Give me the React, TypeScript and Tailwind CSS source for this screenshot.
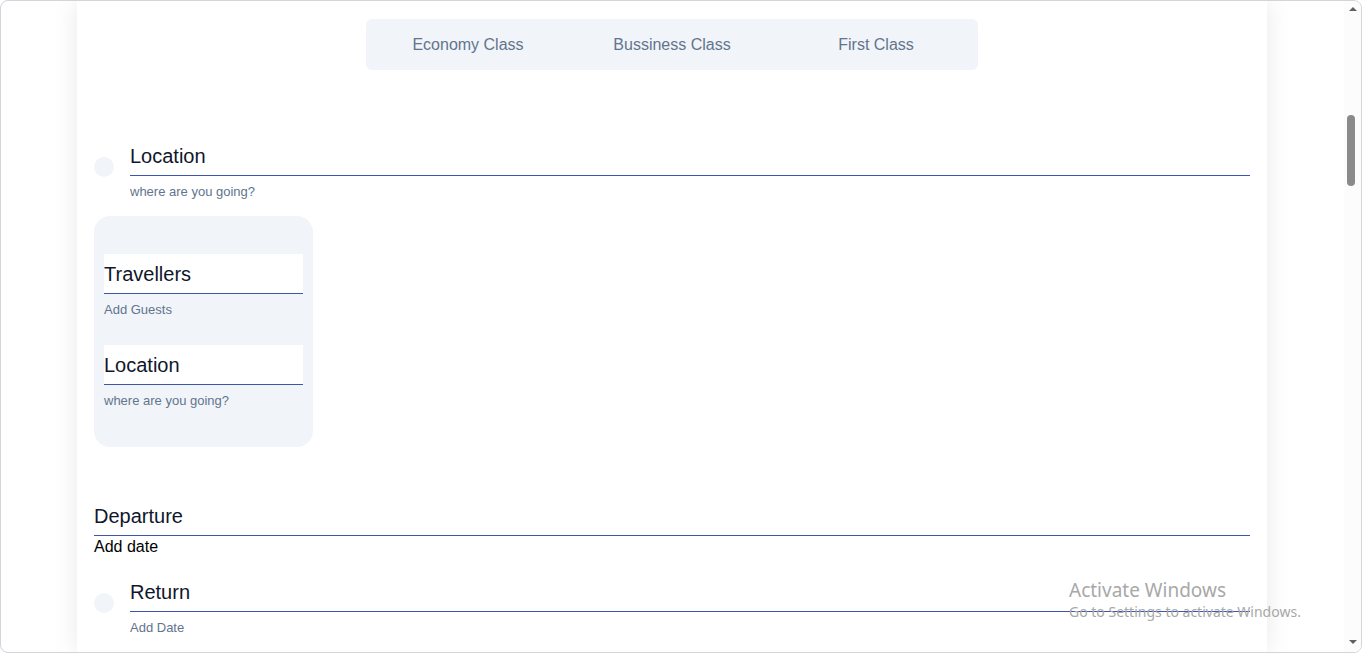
const tabs = ["Economy Class", "Bussiness Class", "First Class"];

function Field({ label, hint }: { label: string; hint: string }) {
  return (
    <div className="flex items-start gap-4">
      <div className="mt-[15px] h-5 w-5 shrink-0 rounded-full bg-slate-100" />
      <div className="flex-1">
        <div className="border-b border-[#3c55ad] pb-[5px] text-[20px] leading-7 text-slate-900">{label}</div>
        <div className="mt-[8px] text-[13px] leading-4 text-slate-500">{hint}</div>
      </div>
    </div>
  );
}

function BoxInput({ label, hint }: { label: string; hint: string }) {
  return (
    <div>
      <div className="flex h-10 items-center border-b border-[#3c55ad] bg-white text-[20px] leading-7 text-slate-900">
        {label}
      </div>
      <div className="mt-[8px] text-[13px] leading-4 text-slate-500">{hint}</div>
    </div>
  );
}

export default function App() {
  return (
    <div
      className="relative flex h-[653px] w-full overflow-hidden rounded-lg border border-gray-300 bg-white"
      style={{ fontFamily: '"Liberation Sans", Arial, sans-serif' }}
    >
      <div className="flex-1 overflow-hidden">
        <div className="ml-[76px] h-full w-[1190px] bg-white px-[17px] pt-[18px] shadow-[0_0_24px_rgba(0,0,0,0.09)]">
          {/* class tabs */}
          <div className="mx-auto grid h-[51px] w-[612px] grid-cols-3 rounded-md bg-slate-100">
            {tabs.map((t) => (
              <button key={t} className="flex items-center justify-center text-base text-slate-500">
                {t}
              </button>
            ))}
          </div>

          <div className="mt-[72px]">
            <Field label="Location" hint="where are you going?" />
          </div>

          {/* dropdown panel */}
          <div className="mt-[16px] w-[219px] rounded-2xl bg-slate-100 px-[10px] pb-[38px] pt-[38px]">
            <BoxInput label="Travellers" hint="Add Guests" />
            <div className="mt-[27px]">
              <BoxInput label="Location" hint="where are you going?" />
            </div>
          </div>

          {/* departure */}
          <div className="mt-[55px]">
            <div className="border-b border-[#3c55ad] pb-[5px] text-[20px] leading-7 text-slate-900">Departure</div>
            <div className="text-base leading-[22px] text-black">Add date</div>
          </div>

          <div className="mt-[20px]">
            <Field label="Return" hint="Add Date" />
          </div>
        </div>
      </div>

      {/* scrollbar */}
      <div className="relative w-[17px] shrink-0 bg-[#fcfcfc]">
        <div className="absolute left-1/2 top-[6px] h-0 w-0 -translate-x-1/2 border-x-[4px] border-b-[4px] border-x-transparent border-b-[#606060]" />
        <div className="absolute left-[3px] top-[114px] h-[71px] w-[8px] rounded-full bg-[#8a8a8a]" />
        <div className="absolute bottom-[8px] left-1/2 h-0 w-0 -translate-x-1/2 border-x-[4px] border-t-[4px] border-x-transparent border-t-[#606060]" />
      </div>

      {/* OS watermark */}
      <div
        className="pointer-events-none absolute left-[1068px] top-[577px] text-[#a8a8a8]"
        style={{ fontFamily: '"Noto Sans", "Open Sans", sans-serif' }}
      >
        <div className="text-[19px] leading-6">Activate Windows</div>
        <div className="text-[14px] leading-5">Go to Settings to activate Windows.</div>
      </div>
    </div>
  );
}
